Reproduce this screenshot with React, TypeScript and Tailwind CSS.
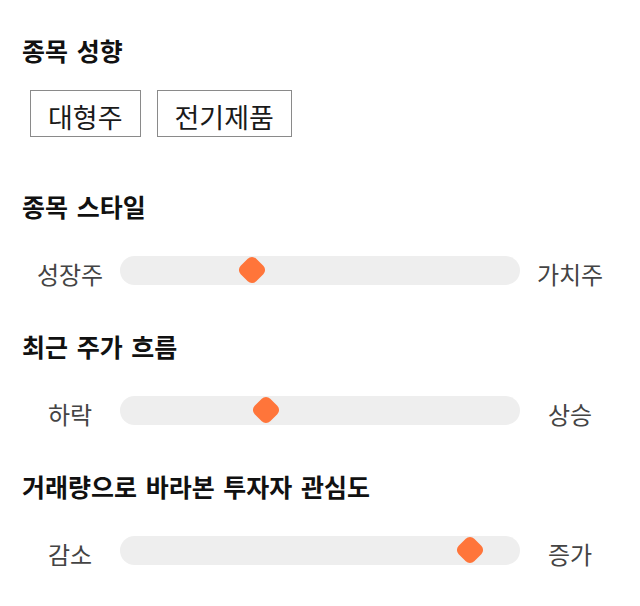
const FONT = "font-['Noto_Sans_CJK_KR','Noto_Sans',sans-serif]";

interface SliderRow {
	title: string;
	left: string;
	right: string;
	value: number;
}

const SLIDERS: SliderRow[] = [
	{ title: "종목 스타일", left: "성장주", right: "가치주", value: 33 },
	{ title: "최근 주가 흐름", left: "하락", right: "상승", value: 36.5 },
	{ title: "거래량으로 바라본 투자자 관심도", left: "감소", right: "증가", value: 87.5 },
];

const TAGS = ["대형주", "전기제품"];

function Heading({ children }: { children: string }) {
	return (
		<h2 className="text-[25px] leading-[32px] font-bold text-[#111] [word-spacing:3px]">
			{children}
		</h2>
	);
}

function Slider({ row, first }: { row: SliderRow; first: boolean }) {
	return (
		<section className={first ? "pt-[53px]" : "pt-[40px]"}>
			<Heading>{row.title}</Heading>
			<div className="mt-[28px] flex items-center h-[40px] -mx-[2px]">
				<span className="w-[100px] shrink-0 text-center text-[24px] leading-[32px] pt-[8px] text-[#444]">
					{row.left}
				</span>
				<div className="relative flex-1 h-[29px] rounded-full bg-[#eeeeee]">
					<span
						className="absolute top-1/2 w-[22px] h-[22px] -translate-x-1/2 -translate-y-1/2 rotate-45 rounded-[6px] bg-[#ff753a]"
						style={{ left: `${row.value}%` }}
					/>
				</div>
				<span className="w-[100px] shrink-0 text-center text-[24px] leading-[32px] pt-[8px] text-[#444]">
					{row.right}
				</span>
			</div>
		</section>
	);
}

export default function App() {
	return (
		<div className={`${FONT} w-[640px] h-[606px] bg-white px-[22px] pt-[34px]`}>
			<section>
				<Heading>종목 성향</Heading>
				<div className="mt-[24px] ml-[8px] flex gap-[16px]">
					{TAGS.map((t) => (
						<span
							key={t}
							className="border border-[#8a8a8a] px-[17px] pt-[8px] pb-[1px] text-[27px] leading-[36px] text-[#1a1a1a]"
						>
							{t}
						</span>
					))}
				</div>
			</section>
			{SLIDERS.map((s, i) => (
				<Slider key={s.title} row={s} first={i === 0} />
			))}
		</div>
	);
}
